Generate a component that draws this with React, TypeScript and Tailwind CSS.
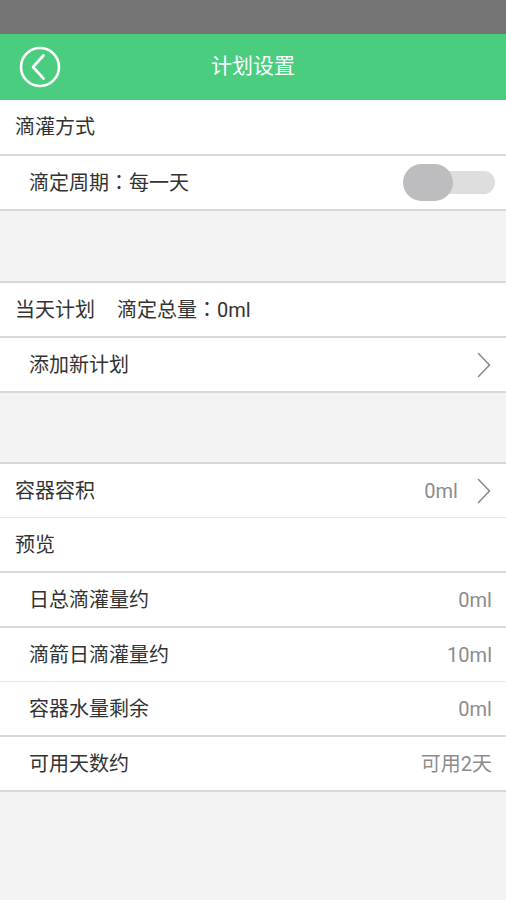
import React from 'react'

const font = { fontFamily: 'Roboto, "Noto Sans CJK SC", sans-serif' }

// the colon in the shot sits in the middle of its cell, as in the TC glyph
const Colon = () => <span style={{ fontFamily: '"Noto Sans CJK TC", sans-serif' }}>：</span>

function Chevron() {
  return (
    <svg width="16" height="26" viewBox="0 0 16 26" fill="none" className="shrink-0">
      <path d="M2.5 1.5 L13.5 13 L2.5 24.5" stroke="#8a8a8a" strokeWidth="1.6" strokeLinecap="round" strokeLinejoin="round" />
    </svg>
  )
}

function Row({
  label,
  value,
  indent,
  light,
  arrow,
  tall,
  children,
}: {
  label: React.ReactNode
  value?: string
  indent?: boolean
  light?: boolean
  arrow?: boolean
  tall?: boolean
  children?: React.ReactNode
}) {
  const size = light
    ? 'h-[54px] border-b border-[#e8e8e8]'
    : tall
      ? 'h-[56px] border-b-2 border-[#d8d8d8]'
      : 'h-[55px] border-b-2 border-[#d8d8d8]'
  return (
    <div
      className={`flex items-center justify-between bg-white pr-[14px] ${size} ${indent ? 'pl-[29px]' : 'pl-[15px]'}`}
    >
      <div className="text-[20px] text-[#333333]">{label}</div>
      <div className="flex items-center gap-[18px]">
        {value && <span className="text-[20px] text-[#8c8c8c]">{value}</span>}
        {arrow && <Chevron />}
        {children}
      </div>
    </div>
  )
}

export default function App() {
  return (
    <div className="min-h-[900px] w-full bg-[#f3f3f3]" style={font}>
      <div className="h-[34px] bg-[#757575]" />
      <div className="relative flex h-[66px] items-center justify-center bg-[#4bcd80]">
        <svg width="44" height="44" viewBox="0 0 44 44" fill="none" className="absolute left-[18px] top-[11px]">
          <circle cx="22" cy="22" r="19" stroke="white" strokeWidth="2.6" />
          <path d="M25.5 10.5 L15 22 L25.5 33.5" stroke="white" strokeWidth="2.6" strokeLinecap="round" strokeLinejoin="round" />
        </svg>
        <span className="text-[21px] text-white">计划设置</span>
      </div>

      <Row label="滴灌方式" tall />
      <Row
        label={
          <>
            滴定周期<Colon />每一天
          </>
        }
        indent
      >
        <div className="relative mr-[-3px] h-[37px] w-[92px]">
          <div className="absolute right-0 top-[7px] h-[23px] w-[80px] rounded-full bg-[#dedede]" />
          <div className="absolute left-0 top-0 h-[37px] w-[50px] rounded-full bg-[#bdbdbf]" />
        </div>
      </Row>

      <div className="h-[70px]" />
      <div className="border-t-2 border-[#d8d8d8]">
        <Row
          label={
            <>
              当天计划
              <span className="ml-[22px]">
                滴定总量<Colon />0ml
              </span>
            </>
          }
        />
        <Row label="添加新计划" indent arrow />
      </div>

      <div className="h-[69px]" />
      <div className="border-t-2 border-[#d8d8d8]">
        <Row label="容器容积" value="0ml" arrow light />
        <Row label="预览" />
        <Row label="日总滴灌量约" value="0ml" indent />
        <Row label="滴箭日滴灌量约" value="10ml" indent light />
        <Row label="容器水量剩余" value="0ml" indent />
        <Row label="可用天数约" value="可用2天" indent />
      </div>
    </div>
  )
}
